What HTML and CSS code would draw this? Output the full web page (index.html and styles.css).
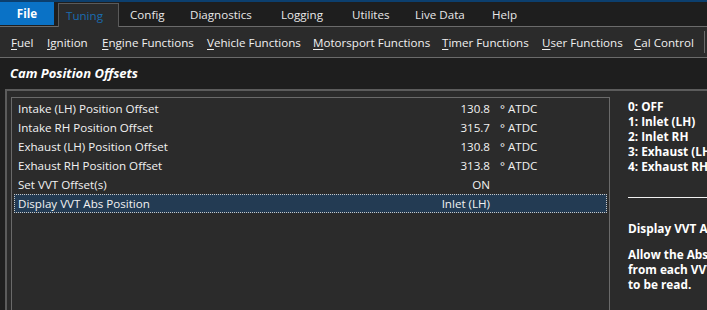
FILE: index.html
```html
<!DOCTYPE html>
<html>
<head>
<meta charset="utf-8">
<link rel="stylesheet" href="styles.css">
</head>
<body>
<div class="app">
  <div class="menubar">
    <div class="file">File</div>
    <div class="tab active">Tuning</div>
    <div class="tab t-config">Config</div>
    <div class="tab t-diag">Diagnostics</div>
    <div class="tab t-log">Logging</div>
    <div class="tab t-util">Utilites</div>
    <div class="tab t-live">Live Data</div>
    <div class="tab t-help">Help</div>
  </div>
  <div class="toolbar">
    <span class="tool w-fuel"><u>F</u>uel</span>
    <span class="tool w-ign"><u>I</u>gnition</span>
    <span class="tool w-eng"><u>E</u>ngine Functions</span>
    <span class="tool w-veh"><u>V</u>ehicle Functions</span>
    <span class="tool w-mot"><u>M</u>otorsport Functions</span>
    <span class="tool w-tim"><u>T</u>imer Functions</span>
    <span class="tool w-usr"><u>U</u>ser Functions</span>
    <span class="tool w-cal"><u>C</u>al Control</span>
    <span class="sep"></span>
  </div>
  <div class="title">Cam Position Offsets</div>
  <div class="panel">
    <div class="listbox">
      <div class="row"><span class="name">Intake (LH) Position Offset</span><span class="val">130.8</span><span class="unit">° ATDC</span></div>
      <div class="row"><span class="name">Intake RH Position Offset</span><span class="val">315.7</span><span class="unit">° ATDC</span></div>
      <div class="row"><span class="name">Exhaust (LH) Position Offset</span><span class="val">130.8</span><span class="unit">° ATDC</span></div>
      <div class="row"><span class="name">Exhaust RH Position Offset</span><span class="val">313.8</span><span class="unit">° ATDC</span></div>
      <div class="row"><span class="name">Set VVT Offset(s)</span><span class="val">ON</span><span class="unit"></span></div>
      <div class="row selected"><span class="name">Display VVT Abs Position</span><span class="val">Inlet (LH)</span><span class="unit"></span></div>
    </div>
    <div class="info">
      <div class="options">
        <div>0: OFF</div>
        <div>1: Inlet (LH)</div>
        <div>2: Inlet RH</div>
        <div>3: Exhaust (LH)</div>
        <div>4: Exhaust RH</div>
      </div>
      <div class="rule"></div>
      <div class="info-title">Display VVT Abs Position</div>
      <div class="info-desc">Allow the Absolute Position<br>from each VVT Cam<br>to be read.</div>
    </div>
  </div>
</div>
</body>
</html>
```
FILE: styles.css
```css
* { box-sizing: border-box; }
html, body { margin: 0; padding: 0; }
body {
  width: 707px;
  height: 310px;
  overflow: hidden;
  background: #1f1f1f;
  font-family: "Open Sans", "Noto Sans", sans-serif;
  font-size: 11.6px;
  color: #ffffff;
}
.app { width: 707px; height: 310px; overflow: hidden; }
.menubar {
  height: 27px;
  display: flex;
  align-items: flex-end;
  background: #1e1e1e;
  border-top: 2px solid #0c3f6e;
  border-bottom: 1px solid #6b6b6b;
  white-space: nowrap;
}
.file {
  width: 54px;
  height: 23px;
  margin-bottom: 1px;
  background: #0a72c6;
  font-weight: bold;
  text-align: center;
  line-height: 24px;
}
.tab {
  height: 24px;
  line-height: 26px;
  padding: 0 7px;
  color: #e8e8e8;
}
.tab.active {
  margin-left: 4px;
  width: 61px;
  margin-bottom: -1px;
  height: 24px;
  padding-left: 7px;
  background: #2b2b2b;
  border: 1px solid #5a5a5a;
  border-bottom: none;
  color: #1a6cb0;
  line-height: 24px;
}
.t-config { margin-left: 3px; width: 61px; padding-left: 8px; }
.t-diag { width: 91px; }
.t-log { width: 71px; }
.t-util { width: 63px; }
.t-live { width: 77px; }
.t-help { width: 60px; }
.toolbar {
  height: 31px;
  display: flex;
  align-items: center;
  background: #2b2b2b;
  border-bottom: 1px solid #6b6b6b;
  padding-left: 11px;
  white-space: nowrap;
}
.tool { color: #f0f0f0; }
.w-fuel { width: 36px; }
.w-ign { width: 55px; }
.w-eng { width: 105px; }
.w-veh { width: 106px; }
.w-mot { width: 129px; }
.w-tim { width: 100px; }
.w-usr { width: 92px; }
.w-cal { width: 70px; }
.tool u { text-decoration-thickness: 1px; text-underline-offset: 2px; }
.sep {
  width: 1px;
  height: 22px;
  background: #6b6b6b;
}
.title {
  height: 31px;
  padding-left: 10px;
  line-height: 31px;
  font-size: 13px;
  font-weight: bold;
  font-style: italic;
  background: #1e1e1e;
}
.panel {
  margin-left: 5px;
  height: 230px;
  border-top: 2px solid #5c5c5c;
  border-left: 2px solid #5c5c5c;
  background: #2b2b2b;
  display: flex;
  padding-top: 6px;
  padding-left: 4px;
}
.listbox {
  width: 599px;
  height: 230px;
  border: 1px solid #6a6a6a;
  padding: 1px 2px;
}
.row {
  height: 19px;
  display: flex;
  align-items: center;
  color: #f2f2f2;
}
.name { flex: 1; padding-left: 4px; }
.val { text-align: right; }
.unit { width: 117px; padding-left: 10px; }
.selected {
  background: #233b53;
  outline: 1px dotted #c8c8c8;
  outline-offset: -1px;
}
.info {
  padding-left: 18px;
  padding-top: 2px;
  font-size: 11.8px;
  font-weight: bold;
  white-space: nowrap;
  flex: 1;
  overflow: hidden;
}
.options { line-height: 15px; }
.rule {
  margin-top: 23px;
  height: 1px;
  background: #f0f0f0;
  margin-right: -10px;
}
.info-title { margin-top: 22px; }
.info-desc { margin-top: 11px; line-height: 15px; }
```
